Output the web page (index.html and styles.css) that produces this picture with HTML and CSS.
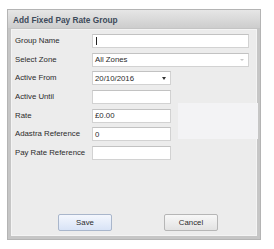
FILE: index.html
```html
<!DOCTYPE html>
<html>
<head>
<meta charset="utf-8">
<link rel="stylesheet" href="styles.css">
</head>
<body>
<div class="dialog">
  <div class="titlebar">Add Fixed Pay Rate Group</div>
  <div class="frame">
    <div class="content">
      <div class="form">
        <div class="label">Group Name</div>
        <div class="field long"><span class="caret"></span></div>
        <div class="label">Select Zone</div>
        <div class="field long select"><span>All Zones</span><span class="arrow light"></span></div>
        <div class="label">Active From</div>
        <div class="field short select"><span>20/10/2016</span><span class="arrow dark"></span></div>
        <div class="label">Active Until</div>
        <div class="field short"></div>
        <div class="label">Rate</div>
        <div class="field short"><span>£0.00</span></div>
        <div class="label">Adastra Reference</div>
        <div class="field short"><span>0</span></div>
        <div class="label">Pay Rate Reference</div>
        <div class="field short"></div>
      </div>
      <div class="ghost"></div>
      <div class="footer">
        <button class="btn primary">Save</button>
        <button class="btn">Cancel</button>
      </div>
    </div>
  </div>
</div>
</body>
</html>
```
FILE: styles.css
```css
html, body {
  margin: 0;
  padding: 0;
  background: #ffffff;
}
body {
  font-family: "Liberation Sans", Arial, sans-serif;
  font-size: 7.8px;
  color: #2b2b2b;
}
.dialog {
  margin: 9px 0 0 7px;
  width: 254px;
  height: 231px;
  box-sizing: border-box;
  border: 1px solid #b4b4b4;
  display: flex;
  flex-direction: column;
  background: #c8c8c8;
}
.titlebar {
  height: 19px;
  flex: none;
  box-sizing: border-box;
  padding: 5px 0 0 5px;
  background: linear-gradient(#e6e6e6, #cdcdcd);
  font-weight: bold;
  font-size: 8.3px;
  color: #3d4a5a;
  border-bottom: 1px solid #c4c4c4;
}
.frame {
  flex: 1;
  padding: 0 3px 3px 3px;
  display: flex;
  background: #c6c6c6;
}
.content {
  flex: 1;
  position: relative;
  background: #ececec;
  border: 1px solid #f4f4f4;
  display: flex;
  flex-direction: column;
}
.form {
  display: grid;
  grid-template-columns: 77px auto;
  grid-auto-rows: 14px;
  row-gap: 4.67px;
  padding: 4px 0 0 3px;
  align-items: center;
}
.label {
  line-height: 14px;
  white-space: nowrap;
}
.field {
  height: 14px;
  box-sizing: border-box;
  background: #ffffff;
  border: 1px solid #d2d2d2;
  border-top-color: #c2c2c2;
  display: flex;
  align-items: center;
  padding-left: 2px;
  position: relative;
}
.field.long {
  width: 157px;
}
.field.short {
  width: 79px;
}
.caret {
  width: 1px;
  height: 8px;
  background: #222;
  margin-left: 1px;
}
.arrow {
  position: absolute;
  right: 4px;
  top: 5px;
  width: 0;
  height: 0;
  border-left: 2.5px solid transparent;
  border-right: 2.5px solid transparent;
  border-top: 3px solid #333;
}
.arrow.light {
  border-top-color: #c8c8c8;
  border-left-width: 2px;
  border-right-width: 2px;
  border-top-width: 2px;
  top: 5.5px;
}
.ghost {
  position: absolute;
  left: 166px;
  top: 73px;
  width: 80px;
  height: 36px;
  background: #f3f3f5;
}
.footer {
  margin-top: auto;
  display: flex;
  gap: 52px;
  padding: 0 0 4px 46px;
}
.btn {
  width: 54px;
  height: 17px;
  box-sizing: border-box;
  border: 1px solid #b6b6b6;
  border-radius: 2px;
  background: linear-gradient(#f8f8f8, #e2e2e2);
  font-family: "Liberation Sans", Arial, sans-serif;
  font-size: 7.8px;
  color: #2b2b2b;
  padding: 0;
  margin: 0;
}
.btn.primary {
  background: linear-gradient(#f4f7fd, #d8e3f6);
  border-color: #a9b6cb;
}
```
